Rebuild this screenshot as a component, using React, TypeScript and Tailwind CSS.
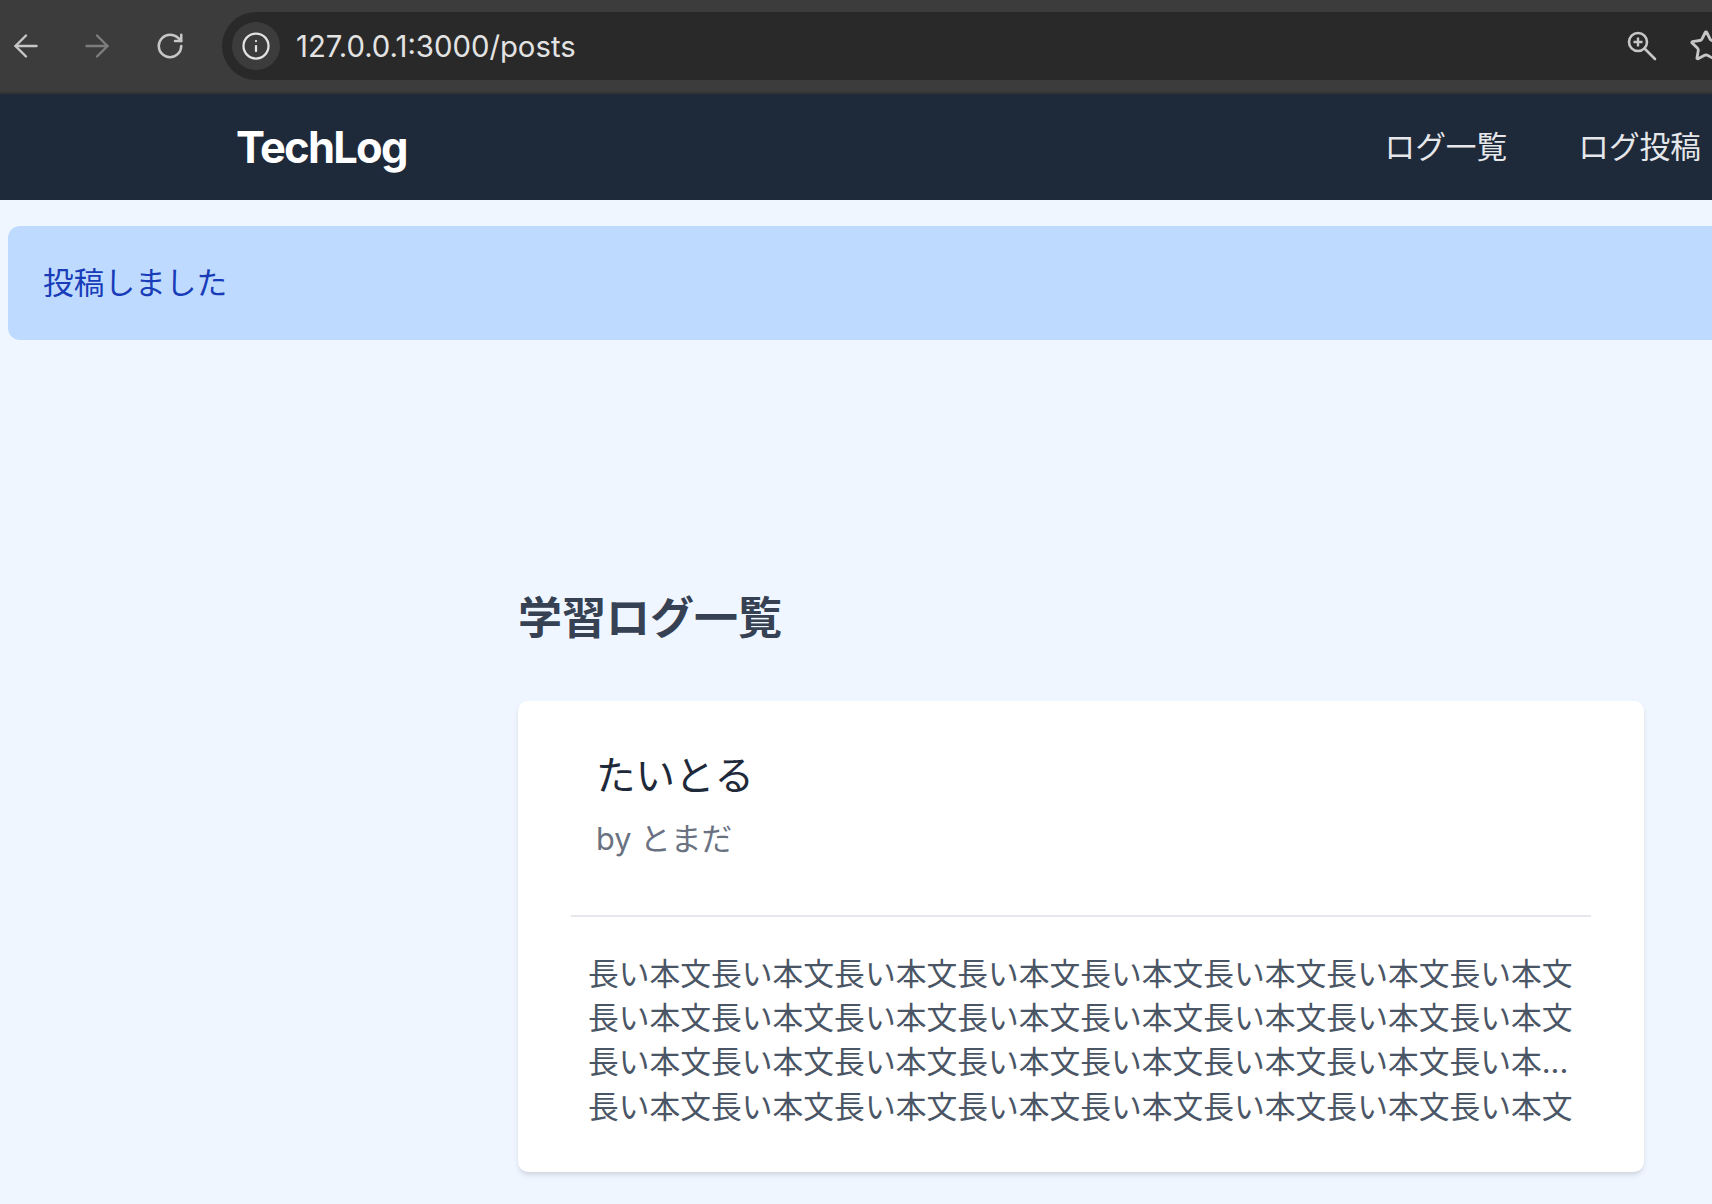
import { ArrowLeft, ArrowRight, RotateCw, Info, Star } from "lucide-react";

const unit = "長い本文";
const full = unit.repeat(8);
const lines = [full, full, unit.repeat(7) + "長い本...", full];

export default function App() {
  return (
    <div
      className="h-[1204px] w-full overflow-hidden bg-blue-50"
      style={{ fontFamily: 'Inter, "Noto Sans CJK JP", sans-serif' }}
    >
      <div className="flex h-[94px] items-center border-b-2 border-[#333333] bg-[#3c3c3c]">
        <div className="flex w-[222px] shrink-0 items-center pl-[8px] text-[#c7c7c7]">
          <ArrowLeft size={36} strokeWidth={1.6} />
          <ArrowRight size={36} strokeWidth={1.6} className="ml-[35px] text-[#7d7d7d]" />
          <RotateCw size={30} strokeWidth={2} className="ml-[40px]" />
        </div>
        <div className="flex h-[68px] flex-1 items-center rounded-l-[34px] bg-[#292929] pl-[10px]">
          <div className="flex h-[48px] w-[48px] items-center justify-center rounded-full bg-[#3c3c3c] text-[#e3e3e3]">
            <Info size={30} strokeWidth={1.8} />
          </div>
          <span className="ml-[16px] mt-[2px] text-[29.3px] leading-none text-[#e3e3e3]">127.0.0.1:3000/posts</span>
          <div className="ml-auto flex items-center text-[#c7c7c7]">
            <svg width="30" height="30" viewBox="0 0 30 30" fill="none" stroke="currentColor" strokeWidth="2.6" strokeLinecap="round">
              <circle cx="11" cy="11" r="9" />
              <path d="M18 18 L28 28" />
              <path d="M11 6.5 V15.5 M6.5 11 H15.5" strokeWidth="2.4" strokeLinecap="butt" />
            </svg>
            <Star size={34} strokeWidth={2} strokeLinejoin="miter" className="ml-[32px] mr-[-11px]" />
          </div>
        </div>
      </div>

      <header className="flex h-[106px] items-center bg-gray-800 pl-[236px] pr-[11px]">
        <span className="pt-[2px] text-[43.5px] font-bold tracking-[-0.04em] text-white">TechLog</span>
        <nav className="ml-auto flex gap-[71px] text-[30.7px] text-gray-200">
          <a>ログ一覧</a>
          <a>ログ投稿</a>
        </nav>
      </header>

      <div className="ml-[8px] mr-[-24px] mt-[26px] flex h-[114px] items-center rounded-[12px] bg-blue-200 pl-[35px] text-[30.7px] text-blue-800">
        投稿しました
      </div>

      <main className="ml-[518px] mt-[248px] w-[1126px]">
        <h1 className="text-[44px] font-bold leading-[60px] text-gray-700">学習ログ一覧</h1>
        <article className="mt-[53px] h-[471px] rounded-[10px] bg-white px-[53px] pt-[46px] shadow-md">
          <div className="pl-[25px]">
            <h2 className="text-[39.5px] leading-[58px] text-gray-800">たいとる</h2>
            <p className="mt-[11px] text-[30.7px] leading-[46px] text-gray-500">by とまだ</p>
          </div>
          <div className="mt-[53px] h-[2px] bg-gray-200" />
          <div className="mt-[35px] pl-[17px] text-[30.78px] leading-[44.2px] whitespace-nowrap text-gray-600">
            {lines.map((line, i) => (
              <div key={i}>{line}</div>
            ))}
          </div>
        </article>
      </main>
    </div>
  );
}
